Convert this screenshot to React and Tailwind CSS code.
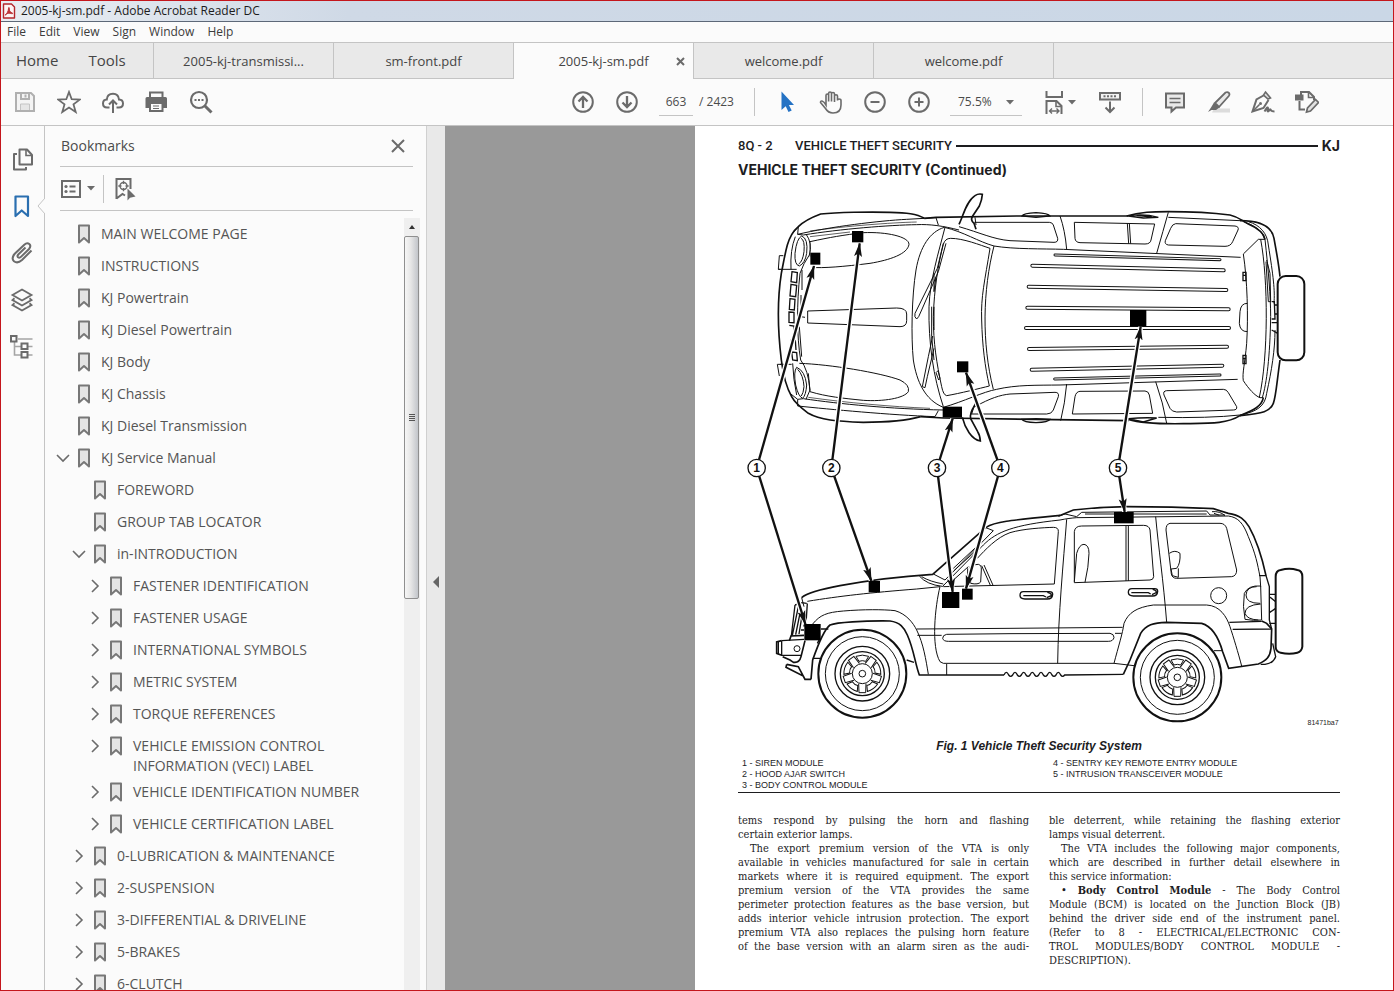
import React from 'react';
import clsx from 'clsx';

const menus = ['File', 'Edit', 'View', 'Sign', 'Window', 'Help'];

const tabs = [
  { id: 1, name: '2005-kj-transmissi...' },
  { id: 2, name: 'sm-front.pdf' },
  { id: 3, name: '2005-kj-sm.pdf', active: true },
  { id: 4, name: 'welcome.pdf' },
  { id: 5, name: 'welcome.pdf' },
];

const bookmarks = [
  { label: 'MAIN WELCOME PAGE', level: 0 },
  { label: 'INSTRUCTIONS', level: 0 },
  { label: 'KJ Powertrain', level: 0 },
  { label: 'KJ Diesel Powertrain', level: 0 },
  { label: 'KJ Body', level: 0 },
  { label: 'KJ Chassis', level: 0 },
  { label: 'KJ Diesel Transmission', level: 0 },
  { label: 'KJ Service Manual', level: 0, state: 'open' },
  { label: 'FOREWORD', level: 1 },
  { label: 'GROUP TAB LOCATOR', level: 1 },
  { label: 'in-INTRODUCTION', level: 1, state: 'open' },
  { label: 'FASTENER IDENTIFICATION', level: 2, state: 'closed' },
  { label: 'FASTENER USAGE', level: 2, state: 'closed' },
  { label: 'INTERNATIONAL SYMBOLS', level: 2, state: 'closed' },
  { label: 'METRIC SYSTEM', level: 2, state: 'closed' },
  { label: 'TORQUE REFERENCES', level: 2, state: 'closed' },
  { label: 'VEHICLE EMISSION CONTROL INFORMATION (VECI) LABEL', level: 2, state: 'closed' },
  { label: 'VEHICLE IDENTIFICATION NUMBER', level: 2, state: 'closed' },
  { label: 'VEHICLE CERTIFICATION LABEL', level: 2, state: 'closed' },
  { label: '0-LUBRICATION & MAINTENANCE', level: 1, state: 'closed' },
  { label: '2-SUSPENSION', level: 1, state: 'closed' },
  { label: '3-DIFFERENTIAL & DRIVELINE', level: 1, state: 'closed' },
  { label: '5-BRAKES', level: 1, state: 'closed' },
  { label: '6-CLUTCH', level: 1, state: 'closed' },
];

const Icon = ({ children, className, size = 24 }) => (
  <svg
    width={size}
    height={size}
    viewBox="0 0 24 24"
    fill="none"
    stroke="currentColor"
    strokeWidth="2"
    className={clsx('shrink-0', className)}
    aria-hidden="true"
  >
    {children}
  </svg>
);

const ToolButton = ({ label, className, children }) => (
  <button
    type="button"
    aria-label={label}
    className={clsx('flex h-9 w-11 shrink-0 items-center justify-center text-[#6b6b6b]', className)}
  >
    {children}
  </button>
);

const RailButton = ({ label, className, children }) => (
  <button
    type="button"
    aria-label={label}
    className={clsx('flex h-[47px] w-[42px] shrink-0 items-center justify-center', className)}
  >
    <Icon>{children}</Icon>
  </button>
);

const Caret = () => (
  <svg width="8" height="5" viewBox="0 0 8 5" className="shrink-0" aria-hidden="true">
    <path d="M0 0H8L4 4.6Z" fill="#6b6b6b" />
  </svg>
);

const TitleBar = () => (
  <div className="flex h-[21px] shrink-0 items-center gap-[5px] border-b border-[#5d6878] bg-linear-to-r from-[#e9edf2] via-[#cfd9e6] via-25% to-[#cad7e6] pl-px">
    <svg width="14" height="16" viewBox="0 0 14 16" aria-hidden="true">
      <path
        d="M1.5 1H9.5L12.5 4V15H1.5Z"
        fill="#fdf3f3"
        stroke="#b3272d"
        strokeWidth="1.4"
        strokeLinejoin="round"
      />
      <path
        d="M3.4 12C4.8 11 6.6 7.8 6.5 5.4C6.4 4 7.6 4.2 7.3 5.6C6.9 7.8 8.6 9.6 10.4 10C11.2 10.4 10.4 11 9.4 10.6C7.6 9.8 5.6 10.2 4.2 11.2C3.2 12.2 2.6 12.3 3.4 12Z"
        fill="#c4373d"
        stroke="#b3272d"
        strokeWidth="0.9"
      />
    </svg>
    <h1 className="text-xs text-[#1c1c1c]">2005-kj-sm.pdf - Adobe Acrobat Reader DC</h1>
  </div>
);

const MenuBar = () => (
  <nav className="flex h-5 shrink-0 items-center gap-[13px] pl-1.5 text-xs text-[#3c3c3c]">
    {menus.map(menu => (
      <button type="button" key={menu}>
        {menu}
      </button>
    ))}
  </nav>
);

const TabBar = () => (
  <div className="flex h-[37px] shrink-0 border-t border-[#c4c4c4] bg-[#e9e9e9] text-[#454545]">
    <div className="flex w-[153px] items-center gap-[30px] border-r border-b border-[#c4c4c4] pl-[15px] text-[15px]">
      <button type="button">Home</button>
      <button type="button">Tools</button>
    </div>
    {tabs.map(tab => (
      <div
        key={tab.id}
        className={clsx(
          'relative flex w-[180px] items-center justify-center border-r border-[#c4c4c4] pt-0.5 text-[13px]',
          tab.active ? 'bg-[#fbfbfb]' : 'border-b'
        )}
      >
        <button type="button">{tab.name}</button>
        {tab.active && (
          <button type="button" aria-label="Close tab" className="absolute right-2 pb-0.5">
            <svg width="9" height="9" viewBox="0 0 9 9" stroke="#6b6b6b" strokeWidth="2">
              <path d="M1 1L8 8M8 1L1 8" />
            </svg>
          </button>
        )}
      </div>
    ))}
    <div className="grow border-b border-[#c4c4c4]" />
  </div>
);

const Toolbar = () => (
  <div className="flex h-[47px] shrink-0 items-center border-b border-[#c4c4c4] pl-0.5 text-xs text-[#4b4b4b]">
    <ToolButton label="Save" className="text-[#b0b0b0]">
      <Icon>
        <path d="M3 3H18L21 6V21H3Z" fill="#f4f4f4" />
        <path d="M8 3V9H16V3" />
        <path d="M12.5 4.5V7.5" />
        <path d="M7.5 20V14H16.5V20" fill="#e6e6e6" stroke="#c4c4c4" strokeWidth="1" />
      </Icon>
    </ToolButton>
    <ToolButton label="Star">
      <Icon>
        <path
          d="M12 2L14.7 9.2L22.8 9.6L16.5 14.4L18.7 22L12 17.5L5.3 22L7.5 14.4L1.2 9.6L9.3 9.2Z"
          strokeWidth="1.8"
        />
      </Icon>
    </ToolButton>
    <ToolButton label="Upload">
      <Icon>
        <path d="M8.5 17.5H6C3.5 17.5 2 16 2 13.5C2 11 3.5 9.6 5.8 9.5C6 6 8.5 3.8 12 3.8C15.5 3.8 17.7 6 18 9.5C20.5 9.6 22 11 22 13.5C22 16 20.5 17.5 18 17.5H15.5" />
        <path d="M12 23V11M8 14.5L12 10.5L16 14.5" />
      </Icon>
    </ToolButton>
    <ToolButton label="Print">
      <Icon>
        <path d="M5 7V2.5H17.5V7" />
        <path d="M2 7H20.5Q22 7 22 8.5V18H18V14H5V18H0.5V8.5Q0.5 7 2 7Z" fill="currentColor" stroke="none" />
        <path d="M5 14V21H17.5V14" fill="#fbfbfb" />
        <path d="M8 16H14M8 18.5H14" strokeWidth="1.2" />
      </Icon>
    </ToolButton>
    <ToolButton label="Find">
      <Icon>
        <circle cx="10" cy="10" r="8" strokeWidth="2.2" />
        <path d="M15.5 15.5L22.5 22.5" strokeWidth="3" />
        <path d="M5.5 10H14.5" strokeDasharray="2 1.5" />
      </Icon>
    </ToolButton>

    <ToolButton label="Previous page" className="ml-[338px]">
      <Icon>
        <circle cx="12" cy="12" r="9.8" />
        <path d="M12 18V7M7.5 11.5L12 7L16.5 11.5" strokeWidth="2.3" />
      </Icon>
    </ToolButton>
    <ToolButton label="Next page">
      <Icon>
        <circle cx="12" cy="12" r="9.8" />
        <path d="M12 6V17M7.5 12.5L12 17L16.5 12.5" strokeWidth="2.3" />
      </Icon>
    </ToolButton>
    <input
      aria-label="Page number"
      defaultValue="663"
      className="ml-2.5 h-7 w-[34px] border-b border-[#c4c4c4] text-center"
    />
    <span className="ml-1.5 w-[55px] shrink-0">/ 2423</span>
    <div className="h-7 border-l border-[#c4c4c4]" />
    <ToolButton label="Select" className="ml-2.5">
      <Icon>
        <path d="M6.500 1.5V20L10.7 16.2L13.5 22L16.7 20.5L13.9 15H19Z" fill="#2472c4" stroke="none" />
      </Icon>
    </ToolButton>
    <ToolButton label="Hand">
      <Icon>
        <path
          d="M7 15V5.5Q7 4 8.3 4Q9.6 4 9.6 5.5V11.5V3.5Q9.6 2 11 2Q12.5 2 12.5 3.5V11.5V3.5Q12.5 2.5 14 2.5Q15.5 2.5 15.5 4V12V6Q15.5 4.8 17 4.8Q18.5 4.8 18.5 6V10.5Q18.5 9 20 9Q22 9 22 10.5V15C22 20 19 23 14 23C10 23 8 21 6.5 18.5L1.5 12.5Q1.5 10.8 3 11Q5 11.5 7 15Z"
          strokeWidth="1.6"
        />
      </Icon>
    </ToolButton>
    <ToolButton label="Zoom out">
      <Icon>
        <circle cx="12" cy="12" r="9.8" />
        <path d="M7.5 12H16.5" />
      </Icon>
    </ToolButton>
    <ToolButton label="Zoom in">
      <Icon>
        <circle cx="12" cy="12" r="9.8" />
        <path d="M7.5 12H16.5M12 7.5V16.5" />
      </Icon>
    </ToolButton>
    <div className="relative ml-[9px] flex shrink-0 items-center">
      <select
        aria-label="Zoom level"
        className="h-7 w-[72px] appearance-none border-b border-[#c4c4c4] pl-2"
      >
        <option>75.5%</option>
      </select>
      <span className="pointer-events-none absolute right-2">
        <Caret />
      </span>
    </div>
    <ToolButton label="Fit width" className="ml-[15px] gap-0.5">
      <Icon>
        <path d="M4.5 1V7H20V1" />
        <path d="M4.5 24V11H14.5L19.5 16V24" />
        <path d="M14 11V16.5H20" strokeWidth="1.6" />
        <path d="M7.5 21H17M10 18.5L7.5 21L10 23.5M14.5 18.5L17 21L14.5 23.5" strokeWidth="1.4" />
      </Icon>
      <Caret />
    </ToolButton>
    <ToolButton label="Read mode" className="ml-[7px]">
      <Icon>
        <path d="M2 3H22V9.5H2Z" fill="#f1f1f1" />
        <path d="M5.5 6.2H19" strokeDasharray="2 1.5" />
        <path d="M12 11.5V22M7.5 17.5L12 22L16.5 17.5" />
      </Icon>
    </ToolButton>
    <div className="ml-2.5 h-7 border-l border-[#c4c4c4]" />
    <ToolButton label="Comment" className="ml-2.5">
      <Icon>
        <path d="M3 3.5H21V17.5H13L8.5 21.5V17.5H3Z" fill="#e9e9e9" />
        <path d="M6.5 8.5H17.5M6.5 12.5H17.5" strokeWidth="1.6" />
      </Icon>
    </ToolButton>
    <ToolButton label="Highlight">
      <Icon>
        <path d="M7 18.5H23V22.5H5Z" fill="#dcdcdc" stroke="none" />
        <path d="M8 13L18.5 2.5Q20.5 1.5 22 3Q23 4.5 21.8 6L12 17Z" fill="#e9e9e9" strokeWidth="1.8" />
        <path d="M7 12.5L12.5 17.5L9 20H4.5L1 22L4 17.5Z" fill="currentColor" stroke="none" />
      </Icon>
    </ToolButton>
    <ToolButton label="Sign">
      <Icon>
        <path d="M14.5 2L19.5 8L17 9L12.5 5Z" fill="#dedede" strokeWidth="1.6" />
        <path d="M12.5 5.5L5.5 9.5L1.5 21.5L12.5 18L17.5 10" strokeWidth="2" />
        <path d="M1.5 21.5L8.5 14.5" strokeWidth="1.6" />
        <circle cx="9.5" cy="13.5" r="1.5" fill="currentColor" stroke="none" />
        <path d="M13.5 21.5C15 19 16.5 16.5 17 18C17.3 19.5 15.8 21.5 17 21.5C18.3 21.5 18.5 18.5 19.5 19.5C20 21 21 21.5 23.5 21.5" />
      </Icon>
    </ToolButton>
    <ToolButton label="More tools">
      <Icon>
        <path d="M6 7V2H14L19 7V10" />
        <path d="M13.5 2V7.5H19" strokeWidth="1.6" />
        <path d="M0 4.5H8.5V10.5H0Z" fill="currentColor" stroke="none" />
        <path d="M4.5 11V19.5H10" />
        <path d="M11.5 22L12.5 18L20.5 9.5L23.5 12.5L15.5 21Z" fill="#e2e2e2" strokeWidth="1.7" />
      </Icon>
    </ToolButton>
  </div>
);

const NavRail = () => (
  <div className="flex w-11 shrink-0 flex-col border-r border-[#c4c4c4] pt-[9px] text-[#6b6b6b]">
    <RailButton label="Page thumbnails">
      <path d="M9.5 2.5H17L22 8V17.5H9.5Z" strokeLinejoin="round" />
      <path d="M16 3V8.5H22" strokeWidth="1.6" />
      <path d="M7 7H4V22.5H16V20" strokeLinejoin="round" />
    </RailButton>
    <div className="relative">
      <RailButton label="Bookmarks" className="text-[#2a6fb0]">
        <path d="M5.5 2.5H18V22L11.7 16.5L5.5 22Z" strokeWidth="2.2" strokeLinejoin="round" />
      </RailButton>
      <svg width="8" height="16" viewBox="0 0 8 16" className="absolute top-4 -right-px" aria-hidden="true">
        <path d="M8 0L1 8L8 16" fill="#fbfbfb" stroke="#c4c4c4" />
      </svg>
    </div>
    <RailButton label="Attachments">
      <path d="M15.5 6.5L8.5 13.2Q6.8 15 8 16.2Q9.5 17.4 11.2 15.6L19 8Q21.5 5 19.3 3Q17 1.2 14.3 3.7L5 12.5Q0.8 17 4 20.2Q7.5 23 12 19L21.5 9.5" />
    </RailButton>
    <RailButton label="Layers">
      <path d="M12 1.5L21.5 7L12 12.5L2.5 7Z" strokeWidth="1.8" />
      <path d="M4.5 10.3L2.5 12L12 17.5L21.5 12L19.5 10.3" strokeWidth="1.8" />
      <path d="M4.5 15.3L2.5 17L12 22.5L21.5 17L19.5 15.3" strokeWidth="1.8" />
    </RailButton>
    <RailButton label="Model tree">
      <path d="M8 4H22.5M4.5 7V20H11M4.5 11.5H11M18 11.5H22.5M18 20H22.5" stroke="#a5a5a5" strokeWidth="1.6" />
      <path d="M1 1H6.5V6.5H1ZM11.5 8.5H17.5V14H11.5ZM11.5 17H17.5V22.5H11.5Z" />
    </RailButton>
  </div>
);

const BookmarkRow = ({ item }) => (
  <li
    className="flex min-h-8 items-start pt-1.5 text-sm leading-5 text-[#555]"
    style={{ paddingLeft: 10 + item.level * 16 }}
  >
    <span className="flex h-5 w-[23px] shrink-0 items-center">
      {item.state && (
        <button type="button" aria-label={item.state === 'open' ? 'Collapse' : 'Expand'}>
          <svg width="16" height="16" viewBox="0 0 16 16" fill="none" stroke="#6b6b6b" strokeWidth="1.6">
            {item.state === 'open' ? <path d="M2 5L8 11L14 5" /> : <path d="M5 2L11 8L5 14" />}
          </svg>
        </button>
      )}
    </span>
    <svg width="12" height="20" viewBox="0 0 12 20" className="mr-[11px] shrink-0" aria-hidden="true">
      <path d="M1 1.5H11V18.5L6 14L1 18.5Z" fill="#e4e4e4" stroke="#777" strokeWidth="2" strokeLinejoin="round" />
    </svg>
    <a href="#page">{item.label}</a>
  </li>
);

const BookmarksPanel = () => (
  <aside className="flex w-[382px] shrink-0 flex-col border-r border-[#d0d0d0]">
    <div className="mr-[13px] ml-[15px] flex h-[41px] shrink-0 items-center justify-between border-b border-[#c4c4c4] pr-2 pl-px">
      <h2 className="text-sm text-[#4b4b4b]">Bookmarks</h2>
      <button type="button" aria-label="Close panel">
        <svg width="14" height="14" viewBox="0 0 14 14" stroke="#6b6b6b" strokeWidth="2">
          <path d="M1 1L13 13M13 1L1 13" />
        </svg>
      </button>
    </div>
    <div className="mr-[13px] ml-[15px] flex h-11 shrink-0 items-center border-b border-[#c4c4c4] text-[#6b6b6b]">
      <button type="button" aria-label="Options" className="flex items-center gap-1.5">
        <svg width="21" height="18" viewBox="0 0 21 18" fill="none" stroke="currentColor">
          <path d="M2 1H20V17H2Z" strokeWidth="2" />
          <path d="M9.5 6.5H15.5M9.5 11.5H15.5" strokeWidth="2" />
          <circle cx="6" cy="6.5" r="1.6" fill="currentColor" stroke="none" />
          <circle cx="6" cy="11.5" r="1.6" fill="currentColor" stroke="none" />
        </svg>
        <Caret />
      </button>
      <div className="ml-2 h-7 border-l border-[#c4c4c4]" />
      <button type="button" aria-label="Find current bookmark" className="ml-2">
        <Icon>
          <path d="M4.5 22V2H18.5V12M4.5 21.5L10.5 17L13 18.5" />
          <circle cx="11.5" cy="9" r="3.5" strokeWidth="1.4" />
          <path d="M11.5 3.8V7M11.5 11V14.2M6.3 9H9.5M13.5 9H16.7" strokeWidth="1.3" />
          <path d="M15.5 11.5V23.5L18 20.8L23.5 19.5Z" fill="currentColor" stroke="none" />
        </Icon>
      </button>
    </div>
    <div className="mt-[7px] flex min-h-0 grow pr-1.5">
      <ul className="grow overflow-hidden pr-5">
        {bookmarks.map(item => (
          <BookmarkRow key={item.label} item={item} />
        ))}
      </ul>
      <div className="flex w-4 shrink-0 flex-col bg-[#efefef]">
        <button type="button" aria-label="Scroll up" className="flex h-[18px] items-center justify-center">
          <svg width="6" height="4" viewBox="0 0 6 4">
            <path d="M0 4L3 0L6 4Z" fill="#333" />
          </svg>
        </button>
        <div className="mr-px flex h-[363px] flex-col items-center justify-center gap-px rounded-xs border border-[#8f8f8f] bg-linear-to-r from-[#f6f6f6] via-[#e6e6e6] via-45% to-[#c2c5ca]">
          <span className="h-px w-1.5 bg-[#555]" />
          <span className="h-px w-1.5 bg-[#555]" />
          <span className="h-px w-1.5 bg-[#555]" />
          <span className="h-px w-1.5 bg-[#555]" />
        </div>
      </div>
    </div>
  </aside>
);

// Drawing units are a third of a screen pixel
const slats = [
  [135, 375, 630, 389, 9],
  [67, 407, 641, 421, 12],
  [56, 470, 649, 480, 12],
  [52, 533, 656, 538, 12],
  [48, 594, 657, 594, 12],
  [57, 657, 651, 650, 12],
  [65, 719, 637, 707, 12],
  [134, 747, 630, 735, 9],
];

const Wheel = ({ x, y }) => (
  <g transform={`translate(${x} ${y})`}>
    <circle r="132" strokeWidth="6" fill="#fff" />
    <circle r="111" />
    <circle r="82" strokeWidth="4" />
    <circle r="66" strokeWidth="4" />
    {[0, 72, 144, 216, 288].map(angle => (
      <g key={angle} transform={`rotate(${angle})`}>
        <path d="M-11 30L-10 57H10L11 30" />
        <path d="M-19 -52Q0 -59 19 -52L10 -37Q0 -41 -10 -37Z" />
      </g>
    ))}
    <circle r="30" fill="#fff" />
    <circle r="10" />
  </g>
);

const TopView = () => (
  <g>
    <g strokeWidth="5">
      <path d="M583 265C560 251 530 248 480 247C420 245 320 247 272 252C245 262 222 273 205 290C187 305 178 325 172 345C165 370 160 400 154 430C143 500 143 600 154 690C160 740 168 770 185 800C195 820 215 835 235 850C270 870 320 874 400 877C470 877 530 872 572 860" />
      <path d="M583 265L618 262L860 258L1195 258M572 860L640 864L1195 872" />
      <path d="M687 283C700 258 708 215 735 197Q745 190 757 193Q756 210 748 228L728 258Q720 270 732 280L738 298" />
      <path d="M697 862C705 895 725 928 751 933Q750 915 743 905L722 866Q718 850 735 825" />
    </g>
    <path d="M205 290L203 313C300 290 450 272 530 268L618 263L625 285M203 313L220 315C330 297 480 285 560 284C600 282 640 288 687 300" />
    <path d="M203 808V828C300 838 480 855 615 860L625 842M203 808L220 806C330 822 480 837 640 840" />
    <path d="M240 303C350 288 480 278 560 276M235 802C350 818 480 830 600 835" strokeWidth="2" />
    <path d="M188 310L205 290M180 790L203 808M196 320Q180 360 183 418M188 700Q190 750 200 795" />
    <path d="M160 377H148L145 418L152 418M154 703H142L148 738M145 418H200M150 703H185" />
    {/* headlamps and grille */}
    <path d="M215 318Q235 325 230 370Q225 400 208 408Q193 405 195 370Q200 325 215 318ZM213 325Q225 330 222 365Q218 395 206 402" />
    <path d="M200 712Q225 722 230 765Q228 795 218 805Q205 800 197 765Q190 725 200 712ZM203 718Q220 735 222 770Q220 790 214 798" />
    <path d="M228 312Q248 340 238 375Q220 400 210 430C200 520 200 620 212 690Q235 720 240 780L228 808" />
    <path d="M216 420V480M213 495V560L225 562M208 590L215 680" />
    <path d="M186 425L202 428L200 458L183 455ZM183 463L200 466L197 500L180 498ZM180 506L195 508L193 540L178 538ZM177 546L192 547V578L177 577ZM178 586L192 588L194 622M182 630L196 632L198 660M185 666L200 668L202 692L188 690Z" strokeWidth="4" />
    {/* hood */}
    <path d="M240 335C300 322 340 315 400 308C470 305 537 320 537 343C533 372 480 390 420 400C340 410 280 415 243 412" />
    <path d="M240 335V380M240 320L360 306" strokeWidth="2" />
    <path d="M208 700C300 703 450 728 510 750Q540 765 535 785C522 805 460 815 400 811C340 805 290 800 240 785L235 730" />
    <path d="M233 543L500 534Q530 534 530 552V572Q530 590 510 590L233 579Z" />
    <path d="M643 292C600 305 570 350 558 420C545 500 543 620 550 690C560 755 585 810 640 832" />
    {/* windshield and wipers */}
    <path d="M645 292C625 370 600 450 597 530C595 640 610 740 640 830" />
    <path d="M640 343Q645 325 662 325C700 325 750 345 780 355C765 450 752 500 755 570C757 650 765 710 778 768C750 775 690 790 650 797Q640 795 635 770C620 700 610 640 610 560C612 480 625 400 640 343Z" />
    <path d="M792 348C758 480 755 640 790 778" />
    <path d="M640 340L622 415L555 550Q552 562 560 567L566 560L575 540L625 425L648 340" />
    <path d="M608 618L595 680L577 770L585 773L592 740L612 655M605 530V620L612 690M612 530V600M612 430V485L618 440" />
    <path d="M618 728L626 750L630 745L624 722Z" />
    <path d="M643 292C700 305 745 335 792 348C850 358 940 356 1000 358L1532 382" />
    <path d="M640 832C700 815 760 785 800 778C860 764 920 766 990 765L1523 748" />
    <path d="M687 290C750 308 790 328 840 332M840 277H733M735 830C780 805 810 795 840 792M840 852H722" />
    <path d="M735 820L725 852M735 262L738 285" />
    <g transform="translate(840 0)">
      <path d="M36 258Q40 250 78 248Q115 250 120 258L78 262ZM36 868Q40 876 78 878Q115 876 120 868L78 866Z" strokeWidth="4" />
      <path d="M350 258C390 245 430 245 475 245C560 245 620 250 660 255C690 262 695 272 715 282C745 295 762 312 765 328" strokeWidth="5" />
      <path d="M355 258Q400 250 445 262L400 264ZM380 256L425 261M355 866Q400 862 440 864L400 876Z" strokeWidth="4" />
      <path d="M475 262L690 272" />
      <path d="M690 272C750 272 785 288 792 325C800 370 806 400 810 440M810 690C800 760 798 800 790 820C780 845 760 850 690 857" strokeWidth="5" />
      <path d="M355 868C400 882 460 882 520 881C600 880 650 882 690 857C730 840 755 830 760 803" strokeWidth="5" />
      <path d="M700 275Q755 292 765 328M715 275C750 285 772 310 775 345C790 440 795 480 792 520M445 862Q600 865 690 855C740 845 765 830 770 790C785 720 795 660 795 600" />
      <path d="M765 328H745L700 372C712 450 715 560 710 640C705 700 696 730 700 752C715 775 735 798 750 803H760" />
      <path d="M752 328C775 450 775 680 748 802M765 328C775 420 782 500 782 560C780 680 770 760 757 803M770 390L780 430L782 515H775L768 395" />
      <path d="M785 515H793L795 567H785M793 525H803M793 552H803M785 578H803M785 600Q795 605 803 610" strokeWidth="4" />
      <rect x="803" y="438" width="80" height="253" rx="24" strokeWidth="6" fill="#fff" />
      <path d="M699 427H708V452H699ZM701 436H706M699 676H708V701H699ZM701 686H706" strokeWidth="4" />
      <path d="M712 520Q692 520 690 545L688 580Q690 605 712 605" />
      <path d="M150 258Q165 300 170 358M475 247Q460 300 440 370M170 762Q165 820 152 872M437 755Q460 820 470 880" />
      <path d="M193 277L434 282L423 330Q421 342 405 342L210 338Q196 337 195 325ZM352 280L356 341M358 280L362 341" />
      <path d="M497 281L675 288Q688 290 684 300L668 335Q662 349 645 349L475 345Q463 343 466 332L482 295Q487 282 497 281Z" />
      <path d="M210 784L405 783Q415 783 418 795L428 850L187 852L195 800Q198 785 210 784Z" />
      <path d="M470 782L640 778Q650 778 655 788L680 830Q682 840 670 840L500 846Q485 845 480 835L462 795Q458 783 470 782Z" />
      <path d="M0 277H118Q127 277 130 285L143 325Q145 337 132 337L0 332M0 792L135 787Q148 787 145 800L130 840Q125 852 110 852H0" />
      {slats.map(([x1, y1, x2, y2, size]) => (
        <g key={y1} strokeLinecap="round">
          <line x1={x1} y1={y1} x2={x2} y2={y2} strokeWidth={size} />
          <line x1={x1} y1={y1} x2={x2} y2={y2} strokeWidth={size - 6} stroke="#fff" />
        </g>
      ))}
    </g>
  </g>
);

const SideView = () => (
  <g transform="translate(0 900)">
    <g strokeWidth="5">
      <path d="M215 503C230 490 260 480 330 467C420 450 500 440 608 433L768 292C795 275 840 271 990 256" />
      <path d="M243 748L248 690C262 650 280 600 300 585C320 577 400 572 480 573C510 577 522 592 532 615C552 660 555 700 568 735H822" />
      <path d="M170 703L205 710L225 748H243M170 703L168 712L220 738L225 748" />
      <path d="M155 632L140 636V670L155 676M178 632L183 618L222 616M158 680L180 690L190 697Q208 700 213 680L225 632" />
    </g>
    <path d="M232 514C330 498 420 488 560 477L630 470M215 503L222 530M568 438Q590 464 637 469M575 440Q600 455 640 462" />
    <path d="M612 433L645 450L790 302L765 292M637 470L760 345C800 305 850 285 990 270M670 415L745 345M672 422L738 362M668 452L715 410" />
    <path d="M742 385C765 360 800 322 840 308C880 296 940 293 970 292Q986 292 985 305L973 462L640 470" />
    <path d="M720 410Q728 403 745 403Q755 405 754 420L752 456Q745 465 722 460ZM755 407L782 468M762 405L790 468M713 415V465" />
    <path d="M630 470C615 530 603 650 630 695L640 700H840" />
    <path d="M248 582C270 555 290 547 340 543C400 538 460 538 495 542C530 552 550 580 560 600C580 640 588 690 595 733M650 702V735" />
    <path d="M560 597L840 595M562 616H635M840 611L650 613Q638 615 638 625Q640 634 655 634H840" />
    {/* front end */}
    <path d="M195 525L215 518L230 520M205 530L187 616M213 535L197 614M195 525L184 618M218 545L207 612M232 520L228 580M213 600H222M222 545Q226 560 222 590" strokeWidth="4" />
    <path d="M155 632L222 628M155 632V676H213M145 634V673M248 685H270M273 597H295M530 690L552 697M270 625L262 640" strokeWidth="4" />
    <circle cx="201" cy="656" r="9" />
    <path d="M822 735q7 -16 14 0q6 8 12 0q7 -16 14 0q6 8 12 0q7 -16 14 0q6 8 12 0q7 -16 14 0q6 8 12 0q7 -16 14 0q6 8 12 0q7 -16 14 0q6 8 12 0q7 -16 14 0q6 8 12 0L1180 733" strokeWidth="4" />
    <Wheel x={397} y={731} />
    <g transform="translate(840 0)">
      <g strokeWidth="5">
        <path d="M148 257L190 240Q270 231 350 230C450 230 530 232 610 236L655 250C690 255 705 270 717 290C745 340 760 400 768 437" />
        <path d="M340 733L360 690L392 610C408 585 430 578 470 577L575 580C610 590 628 630 638 665L656 715L745 702C770 692 780 680 783 655L785 597L770 580L755 573" />
      </g>
      <path d="M145 259L165 252L200 260L215 247L590 243L600 255H645M225 252H590M606 245Q630 243 645 257M612 250L628 256" />
      <path d="M150 270C170 266 185 264 200 263L655 258C685 262 700 280 715 320C738 375 742 400 750 440L752 470" />
      <path d="M747 437H768L778 470V570L785 597M668 598L785 597M658 577L755 574" strokeWidth="4" />
      <path d="M170 268C160 400 145 550 143 700M437 260C445 350 460 450 470 577M0 700H312L372 707" />
      <path d="M193 458V305Q195 288 215 288L400 286Q418 286 420 300L431 440Q430 450 420 450ZM348 287V453M355 287V453" />
      <path d="M193 455L200 370Q208 343 222 343Q237 345 237 370Q236 410 225 457" />
      <path d="M480 280H630Q645 280 650 295L680 420Q680 438 665 440L500 445Q487 445 484 432L468 300Q468 282 480 280Z" />
      <path d="M478 370Q495 358 510 370Q512 400 500 415L483 417L487 437L505 442V415" />
      <circle cx="626" cy="497" r="24" />
      <path d="M752 468Q715 465 703 490Q697 530 705 568Q730 573 755 570ZM750 520Q708 520 708 495Q710 470 740 470M752 522Q705 525 705 550Q710 568 745 570" />
      <path d="M312 700C325 650 338 610 342 580C355 548 380 532 430 525L590 525C630 527 650 560 660 590C670 620 685 670 695 708" />
      <path d="M0 595L338 592M315 610H335M0 611L300 610Q312 612 312 622Q310 634 295 634H0M612 662H636" />
      <path d="M778 493H797M778 500L797 515M778 548L797 535M778 580H797M788 640L797 680Q790 700 765 703H752" strokeWidth="4" />
      <path d="M797 440Q797 422 812 420Q838 412 862 420Q877 422 877 440V650Q875 665 862 668Q838 674 812 668Q797 665 797 650Z" strokeWidth="6" fill="#fff" />
      <path d="M40 485H118Q128 485 128 493Q127 507 112 507H45Q30 507 30 496Q30 485 40 485ZM40 497H100L108 501M112 487Q125 490 124 497L110 503" strokeWidth="4" />
      <path d="M366 476H434Q443 476 443 484Q442 498 428 498H370Q355 498 355 487Q355 476 366 476ZM364 488H415L422 492M428 478Q440 481 439 488L426 494" strokeWidth="4" />
      <Wheel x={502} y={742} />
    </g>
  </g>
);

const modules = [
  [366, 303, 34, 34],
  [241, 368, 30, 36],
  [681, 694, 34, 33],
  [638, 830, 58, 33],
  [1200, 540, 49, 49],
  [416, 1353, 34, 34],
  [223, 1482, 49, 49],
  [636, 1386, 52, 48],
  [696, 1376, 32, 33],
  [1152, 1146, 59, 34],
];

const callouts = [
  { n: 1, x: 80, up: [252, 408], down: [226, 1482] },
  { n: 2, x: 304, up: [389, 340], down: [424, 1353] },
  { n: 3, x: 621, up: [668, 866], down: [668, 1386] },
  { n: 4, x: 811, up: [708, 728], down: [708, 1376] },
  { n: 5, x: 1164, up: [1232, 590], down: [1184, 1146] },
];

const TheftSystemFigure = () => (
  <svg
    viewBox="24 168 1806 1632"
    className="mt-2 h-[544px] w-full"
    fill="none"
    stroke="#111"
    strokeWidth="3"
    role="img"
    aria-label="Vehicle Theft Security System"
  >
    <defs>
      <marker id="head" markerUnits="userSpaceOnUse" markerWidth="44" markerHeight="30" refX="40" refY="15" orient="auto">
        <path d="M0 3L42 15L0 27L9 15Z" fill="#111" stroke="none" />
      </marker>
    </defs>
    <TopView />
    <SideView />
    {callouts.map(({ n, x, up, down }) => (
      <g key={n}>
        <path d={`M${up[0]} ${up[1]}L${x} 1014L${down[0]} ${down[1]}`} stroke="#fff" strokeWidth="15" />
        <path d={`M${x} 1014L${up[0]} ${up[1]}`} strokeWidth="7" markerEnd="url(#head)" />
        <path d={`M${x} 1014L${down[0]} ${down[1]}`} strokeWidth="7" markerEnd="url(#head)" />
        <circle cx={x} cy="1014" r="26" fill="#fff" strokeWidth="4" />
        <text
          x={x}
          y="1026"
          textAnchor="middle"
          fill="#111"
          stroke="none"
          className="font-['Liberation_Sans',sans-serif] text-[36px] font-bold"
        >
          {n}
        </text>
      </g>
    ))}
    {modules.map(([x, y, width, height]) => (
      <rect key={`${x}-${y}`} x={x} y={y} width={width} height={height} fill="#000" stroke="none" />
    ))}
    <text
      x="1826"
      y="1784"
      textAnchor="end"
      fill="#222"
      stroke="none"
      className="font-['Liberation_Sans',sans-serif] text-[21px]"
    >
      81471ba7
    </text>
  </svg>
);

const Line = ({ children, end, indent }) => (
  <span className={clsx('block whitespace-nowrap', !end && '[text-align-last:justify]', indent && 'pl-3')}>
    {children}
  </span>
);

const ManualPage = () => (
  <article className="min-w-0 grow bg-white pt-3 pr-[53px] pl-[43px] font-['Liberation_Sans',sans-serif] text-[#1d1d1f]">
    <header className="flex h-4 items-center gap-1 font-['Roboto',sans-serif] text-[13px] font-medium">
      <span className="w-[53px]">8Q - 2</span>
      <span className="whitespace-nowrap">VEHICLE THEFT SECURITY</span>
      <span className="h-0.5 grow bg-[#1d1d1f]" />
      <span className="font-['Inter',sans-serif] text-sm font-bold">KJ</span>
    </header>
    <h2 className="mt-2 font-['Inter',sans-serif] text-sm leading-4 font-bold">
      VEHICLE THEFT SECURITY (Continued)
    </h2>
    <figure>
      <TheftSystemFigure />
      <figcaption className="mt-2 text-center text-xs leading-4 font-bold italic">
        Fig. 1 Vehicle Theft Security System
      </figcaption>
      <div className="grid grid-cols-2 gap-x-5 border-b border-[#1d1d1f] pt-1 pb-px text-[9px] leading-[11px]">
        <div className="pl-1">
          <p>1 - SIREN MODULE</p>
          <p>2 - HOOD AJAR SWITCH</p>
          <p>3 - BODY CONTROL MODULE</p>
        </div>
        <div className="pl-1">
          <p>4 - SENTRY KEY REMOTE ENTRY MODULE</p>
          <p>5 - INTRUSION TRANSCEIVER MODULE</p>
        </div>
      </div>
    </figure>
    <div className="mt-[21px] grid grid-cols-2 gap-x-5 font-['DejaVu_Serif_Condensed','DejaVu_Serif',serif] text-[11px] leading-[14px]">
      <div>
        <p>
          <Line>tems respond by pulsing the horn and flashing</Line>
          <Line end>certain exterior lamps.</Line>
        </p>
        <p>
          <Line indent>The export premium version of the VTA is only</Line>
          <Line>available in vehicles manufactured for sale in certain</Line>
          <Line>markets where it is required equipment. The export</Line>
          <Line>premium version of the VTA provides the same</Line>
          <Line>perimeter protection features as the base version, but</Line>
          <Line>adds interior vehicle intrusion protection. The export</Line>
          <Line>premium VTA also replaces the pulsing horn feature</Line>
          <Line>of the base version with an alarm siren as the audi-</Line>
        </p>
      </div>
      <div>
        <p>
          <Line>ble deterrent, while retaining the flashing exterior</Line>
          <Line end>lamps visual deterrent.</Line>
        </p>
        <p>
          <Line indent>The VTA includes the following major components,</Line>
          <Line>which are described in further detail elsewhere in</Line>
          <Line end>this service information:</Line>
        </p>
        <p>
          <Line indent>
            • <b>Body Control Module</b> - The Body Control
          </Line>
          <Line>Module (BCM) is located on the Junction Block (JB)</Line>
          <Line>behind the driver side end of the instrument panel.</Line>
          <Line>(Refer to 8 - ELECTRICAL/ELECTRONIC CON-</Line>
          <Line>TROL MODULES/BODY CONTROL MODULE -</Line>
          <Line end>DESCRIPTION).</Line>
        </p>
      </div>
    </div>
  </article>
);

const App = () => (
  <div className="flex h-screen flex-col overflow-hidden border border-[#c4161c] bg-[#fbfbfb] font-['Open_Sans','Noto_Sans',sans-serif]">
    <TitleBar />
    <MenuBar />
    <TabBar />
    <Toolbar />
    <main className="flex min-h-0 grow">
      <NavRail />
      <BookmarksPanel />
      <button
        type="button"
        aria-label="Collapse panel"
        className="flex w-[18px] shrink-0 items-center justify-center bg-[#e9e9e9] pt-12"
      >
        <svg width="6" height="12" viewBox="0 0 6 12">
          <path d="M6 0V12L0 6Z" fill="#666" />
        </svg>
      </button>
      <div className="w-[250px] shrink-0 bg-[#999]" />
      <ManualPage />
    </main>
  </div>
);

export default App;
